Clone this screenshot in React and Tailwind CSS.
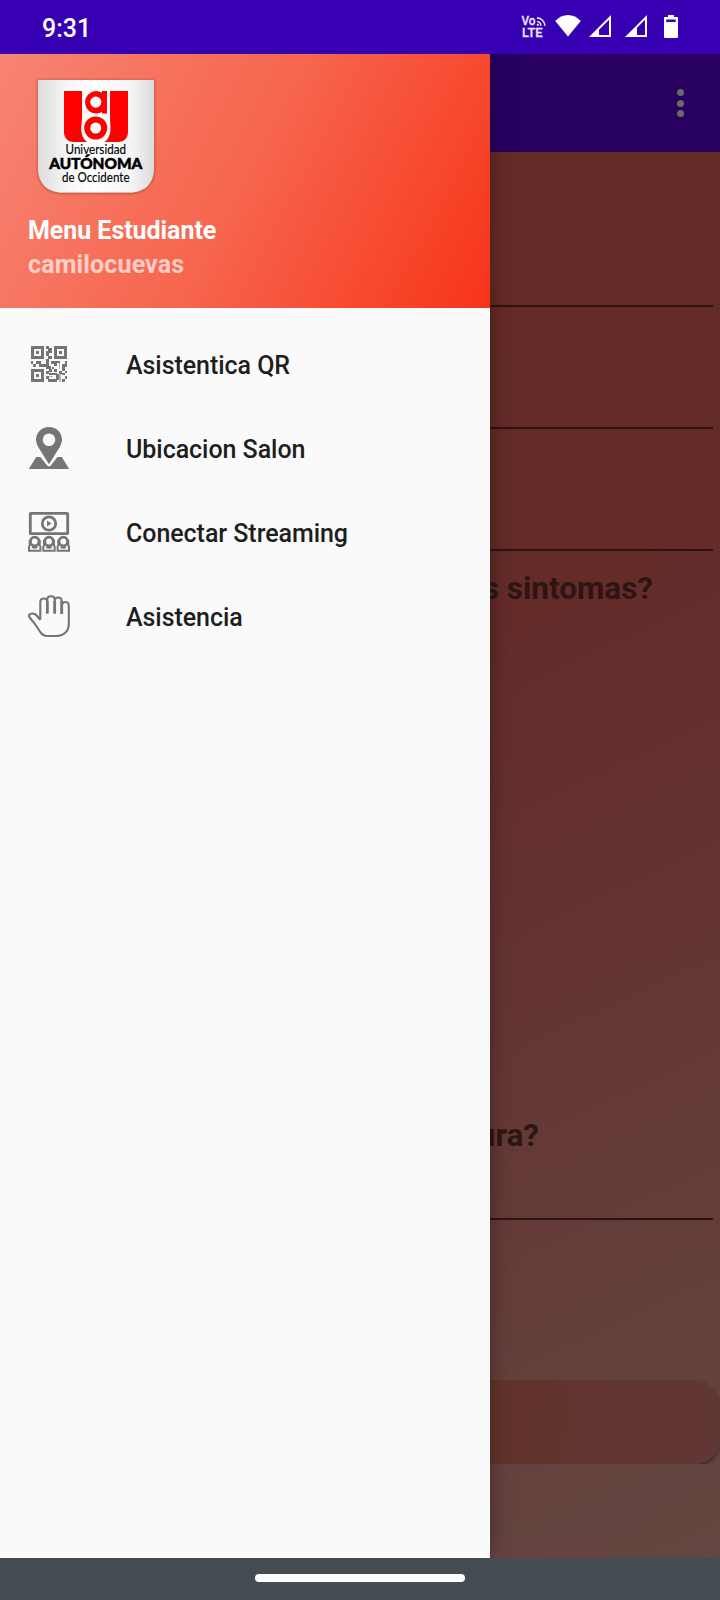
import React from "react";

function StatusIcons() {
  return (
    <svg className="h-[54px] w-[220px] shrink-0" viewBox="500 0 220 54" fill="#fff">
      <g fontFamily="Roboto, sans-serif" fontWeight="500" fill="#e9e2f7" stroke="#e9e2f7" strokeWidth=".3">
        <text x="521.5" y="25" fontSize="12" textLength="14" lengthAdjust="spacingAndGlyphs">Vo</text>
        <text x="522" y="36.8" fontSize="12.800" textLength="20.500" lengthAdjust="spacingAndGlyphs">LTE</text>
      </g>
      <g fill="none" stroke="#e9e2f7" strokeWidth="1.6">
        <path d="M537 21.5a4 4 0 0 1 3.8 4.2M537 17.900a8.5 8.5 0 0 1 8 7.800" />
      </g>
      <circle cx="537.8" cy="24.8" r="1.1" />
      <path d="M568 36.6 555.2 21c3.600-3.700 8-5.900 12.800-5.900s9.200 2.200 12.800 5.900z" />
      <path fillRule="evenodd" d="M589 37 611 15v22zM599 35h10V19.800l-10 10z" />
      <path fillRule="evenodd" d="M625 37 647 15v22zM637 35h8V19.800l-8 8z" />
      <path fillRule="evenodd" d="M668 15h6v2h3q1 0 1 1v19q0 1-1 1h-12q-1 0-1-1V18q0-1 1-1h3zM666.300 19.500v2.500h9.400v-2.500z" />
    </svg>
  );
}

function Logo() {
  return (
    <svg className="h-[126px] w-[130px] overflow-visible" viewBox="30 72 130 126" role="img">
      <defs>
        <linearGradient id="shield" x1="0" x2="1" y1="0" y2="0">
          <stop offset="0" stopColor="#dcdcdc" />
          <stop offset=".25" stopColor="#f6f6f6" />
          <stop offset=".5" stopColor="#fff" />
          <stop offset=".8" stopColor="#f5f5f5" />
          <stop offset="1" stopColor="#dcdcdc" />
        </linearGradient>
        <filter id="shade" x="-10%" y="-10%" width="120%" height="120%">
          <feDropShadow dx="0" dy="0.500" stdDeviation="1.500" floodColor="#5a2018" floodOpacity=".6" />
        </filter>
      </defs>
      <path d="M38 80h116v88c0 15-9 24.500-24 24.500H62c-15 0-24-9.500-24-24.500z" fill="url(#shield)" filter="url(#shade)" />
      <path d="M64 91h18v28c0 4-.8 5.500-.8 9.500 0 5.500 1.800 10.500 6 13.500H74c-6 0-10-4-10-10zM110 91h18v41c0 6-4 10-10 10h-13.500c4-3 6-8 6-13.500 0-4-.5-5.500-.5-9.500z" fill="#f00" />
      <path fillRule="evenodd" d="M95.800 91a11 11 0 0 1 6.200 1.800V91h5v22.500h-5v-1.400A11.300 11.300 0 1 1 95.800 91zm0 5.500a5.600 5.600 0 1 0 0 11.200 5.600 5.600 0 0 0 0-11.200z" fill="#f00" />
      <circle cx="95.700" cy="128" r="8.500" fill="none" stroke="#f00" strokeWidth="6" />
      <g fill="#000" fontFamily="Lato, sans-serif" fontWeight="400" stroke="#000" strokeWidth=".15">
        <text x="65.500" y="153.500" fontSize="13.200" textLength="60.500" lengthAdjust="spacingAndGlyphs">Universidad</text>
        <text x="49.300" y="169.300" fontSize="14.800" fontWeight="900" strokeWidth=".5" textLength="93" lengthAdjust="spacingAndGlyphs">AUTÓNOMA</text>
        <text x="62" y="181.500" fontSize="13.200" textLength="67.500" lengthAdjust="spacingAndGlyphs">de Occidente</text>
      </g>
    </svg>
  );
}

function QrIcon() {
  return (
    <svg className="size-[42px]" viewBox="28 343 42 42" fill="#757575" shapeRendering="crispEdges">
      <path
        fillRule="evenodd"
        d="M31 346h13v13H31zM34 349v7h7v-7zM54 346h13v13H54zM57 349v7h7v-7zM31 369h13v13H31zM34 372v7h7v-7z"
      />
      <path d="M36 351h3v3h-3zM59 351h3v3h-3zM36 374h3v3h-3z" />
      <path d="M46 346h3v3h-3zM48 348h4v3h-4zM46 351h3v5h-3zM49 351h3v2h-3zM48 356h4v3h-4zM46 359h3v2h-3z" />
      <path d="M31 361h2v3h-2zM33 364h3v3h-3zM36 361h5v3h-5zM39 364h10v3H39zM46 366h5v3h-5zM46 361h3v3h-3zM51 361h3v3h-3zM54 361h3v5h-3zM56 361h4v2h-4zM62 364h5v3h-5zM65 361h2v3h-2zM62 366h3v5h-3z" />
      <path d="M46 371h3v3h-3zM49 369h3v3h-3zM52 367h2v2h-2zM49 373h8v2h-8zM54 369h3v3h-3zM46 376h3v3h-3zM48 379h9v3h-9zM56 374h3v6h-3zM59 371h3v3h-3zM62 373h3v2h-3zM65 371h2v2h-2zM62 379h3v3h-3zM65 376h2v3h-2z" />
      <path d="M59 361h1v8h-1zM49 376h4v1h-4zM59 374h2v8h-2z" opacity=".5" />
    </svg>
  );
}

function PinIcon() {
  return (
    <svg className="size-[42px]" viewBox="28 427 42 42" fill="#757575">
      <path
        fillRule="evenodd"
        d="M49 427c7.300 0 13 5.500 13 12.600 0 3-1.100 5.300-2.500 7.900L49 464.200 38.500 447.500c-1.400-2.600-2.500-4.900-2.500-7.900C36 432.500 41.700 427 49 427zm0 6.500a6.300 6.300 0 1 0 0 12.600 6.300 6.300 0 0 0 0-12.600z"
      />
      <path d="M36.200 457h4.200l6.500 8.300q2.100 2.200 4.200 0l6.300-8.300h4.400l7.400 12H28.800z" />
    </svg>
  );
}

function StreamingIcon() {
  return (
    <svg className="size-[42px]" viewBox="28 511 42 42" fill="none" stroke="#757575" strokeWidth="2.800">
      <rect x="30.300" y="513.300" width="37.400" height="20.400" rx=".5" />
      <circle cx="49" cy="523.500" r="6.700" />
      <path d="M47 520.500v6l4.500-3z" fill="#757575" stroke="none" />
      {[0, 14.300, 28.600].map((x) => (
        <g key={x} transform={`translate(${x} 0)`}>
          <circle cx="34.700" cy="541.500" r="4.300" strokeWidth="2.800" />
          <path d="M29.700 540v5.500l-.7 1v4.200h11.400v-4.200l-.7-1V540" strokeWidth="2" />
          <path d="M32 547q2.700 1.500 5.400 0" strokeWidth="2" />
        </g>
      ))}
    </svg>
  );
}

function HandIcon() {
  return (
    <svg className="size-[42px]" viewBox="28 595 42 42" fill="none" stroke="#757575" strokeWidth="2.100" strokeLinejoin="round">
      <path d="M40.300 619.800V602q0-3.500 3.500-3.500t3.500 3.500v11.500M47.300 613.500V599.500q0-3.300 3.700-3.300t3.700 3.300v14M54.700 613.500V601q0-3.500 3.500-3.500t3.500 3.500v13M62 614v-8.500q0-3.500 3.400-3.500t3.400 3.500V624c0 8-6 12-12 12H47c-2.500 0-4.500-1-6-3-3-4-5.500-9-9-12.500-1.500-2-3-3.500-3-4.500 0-2 1.500-2.500 3.500-2.500s3.500 1 5 3q1.500 2 2.800 3.300" />
      <path d="M47.300 601v12.500M54.700 601v12.500M61.700 601v13" strokeWidth="2.700" />
    </svg>
  );
}

const items = [
  { label: "Asistentica QR", Icon: QrIcon },
  { label: "Ubicacion Salon", Icon: PinIcon },
  { label: "Conectar Streaming", Icon: StreamingIcon },
  { label: "Asistencia", Icon: HandIcon },
];

function Drawer() {
  return (
    <aside className="z-10 flex w-[490px] shrink-0 flex-col bg-[#fafafa] shadow-[0_0_20px_rgba(0,0,0,0.35)]">
      <header className="flex h-[254px] flex-col bg-[linear-gradient(117.400deg,#f78473_0%,#f6654d_50%,#f73418_100%)] pt-[18px] font-bold text-white">
        <div className="ml-[30px] h-[126px]">
          <Logo />
        </div>
        <div className="mt-[16px] ml-7 text-[25px] leading-[34px]">
          <p className="tracking-[-0.050px]">Menu Estudiante</p>
          <p className="tracking-[0.150px] text-white/65">camilocuevas</p>
        </div>
      </header>
      <nav className="pt-[14px]">
        {items.map(({ label, Icon }) => (
          <a key={label} className="flex h-[84px] items-center pl-7">
            <Icon />
            <span className="ml-14 pt-1 text-[25px] font-medium tracking-[-0.050px] text-[#1e1e1e]">{label}</span>
          </a>
        ))}
      </nav>
    </aside>
  );
}

function Page() {
  return (
    <main className="flex w-[230px] flex-col overflow-hidden bg-[linear-gradient(155deg,#662a22_-40%,#642b29_35%,#643a37_72%,#644742_100%)] text-[31.500px] font-bold text-[#2d1513]">
      <div className="flex h-[98px] shrink-0 items-center justify-end bg-[#270060] pr-[36px]">
        <div className="flex flex-col gap-[3.500px]">
          <i className="size-[7px] rounded-full bg-[#6b6868]" />
          <i className="size-[7px] rounded-full bg-[#6b6868]" />
          <i className="size-[7px] rounded-full bg-[#6b6868]" />
        </div>
      </div>
      <div className="mr-[7px] h-[155px] shrink-0 border-b-2 border-[#2c1412]" />
      <div className="mr-[7px] h-[122px] shrink-0 border-b-2 border-[#2c1412]" />
      <div className="mr-[7px] h-[122px] shrink-0 border-b-2 border-[#2c1412]" />
      <p className="mt-[18px] mr-[67px] flex h-10 shrink-0 items-center justify-end whitespace-nowrap">s sintomas?</p>
      <p className="mt-[507px] mr-[181px] flex h-10 shrink-0 items-center justify-end whitespace-nowrap">ura?</p>
      <div className="mr-[7px] h-[64px] shrink-0 border-b-2 border-[#2c1412]" />
      <div className="mt-[160px] h-[84px] shrink-0 overflow-hidden">
        <div className="h-[84px] rounded-r-[26px] bg-[linear-gradient(95deg,#62332b,#613736)] shadow-[0_3px_4px_rgba(0,0,0,0.4)]" />
      </div>
    </main>
  );
}

export default function App() {
  return (
    <div className="flex h-[1600px] w-[720px] flex-col overflow-hidden font-[Roboto,sans-serif]">
      <div className="z-20 flex h-[54px] shrink-0 items-center justify-between bg-[#3700b3] text-white">
        <span className="pt-[3px] pl-[42px] text-[25px] font-medium">9:31</span>
        <StatusIcons />
      </div>
      <div className="flex h-[1504px] shrink-0 overflow-hidden">
        <Drawer />
        <Page />
      </div>
      <div className="z-20 flex h-[42px] shrink-0 justify-center bg-[#454d52] pt-4">
        <div className="h-2 w-[210px] rounded bg-white" />
      </div>
    </div>
  );
}
